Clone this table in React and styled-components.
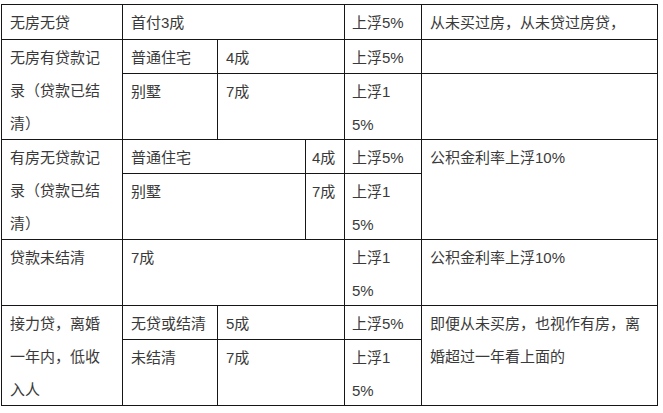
import React from 'react'
import styled, { createGlobalStyle } from 'styled-components'

const GlobalStyle = createGlobalStyle`
    html, body {
        margin: 0;
        padding: 0;
        background: #ffffff;
    }
    body {
        font-family: "Liberation Sans", "Noto Sans CJK SC", sans-serif;
    }
`

const Table = styled.div`
    display: grid;
    grid-template-columns: 121px 95px 88px 39px 77px 236px;
    grid-template-rows: 35px 34px 66px 34px 66px 66px 34px 66px;
    margin: 4px 0 0 1px;
    width: max-content;
    border-top: 1px solid #161616;
    border-left: 1px solid #161616;
    color: #3a3a3a;
    font-size: 15px;
    line-height: 33px;
`

const Cell = styled.div`
    grid-column: ${props => props.col} / span ${props => props.colSpan || 1};
    grid-row: ${props => props.row} / span ${props => props.rowSpan || 1};
    border-right: 1px solid #161616;
    border-bottom: 1px solid #161616;
    padding: 1px ${props => props.padRight || 8}px 0 ${props => props.padLeft || 8}px;
    overflow: hidden;
    word-break: break-all;
`

// narrow rate column, text wraps inside "上浮15%"
const RateCell = styled(Cell)`
    padding: 1px 11px 0 7px;
`

const rows = [
    // row 1
    { col: 1, row: 1, text: '无房无贷' },
    { col: 2, row: 1, colSpan: 3, text: '首付3成' },
    { col: 5, row: 1, rate: true, text: '上浮5%' },
    { col: 6, row: 1, text: '从未买过房，从未贷过房贷，' },
    // row 2
    { col: 1, row: 2, rowSpan: 2, text: '无房有贷款记录（贷款已结清）' },
    { col: 2, row: 2, text: '普通住宅' },
    { col: 3, row: 2, colSpan: 2, text: '4成' },
    { col: 5, row: 2, rate: true, text: '上浮5%' },
    { col: 6, row: 2, text: '' },
    { col: 2, row: 3, text: '别墅' },
    { col: 3, row: 3, colSpan: 2, text: '7成' },
    { col: 5, row: 3, rate: true, text: '上浮15%' },
    { col: 6, row: 3, text: '' },
    // row 3
    { col: 1, row: 4, rowSpan: 2, text: '有房无贷款记录（贷款已结清）' },
    { col: 2, row: 4, colSpan: 2, text: '普通住宅' },
    { col: 4, row: 4, padLeft: 6, padRight: 2, text: '4成' },
    { col: 5, row: 4, rate: true, text: '上浮5%' },
    { col: 6, row: 4, rowSpan: 2, text: '公积金利率上浮10%' },
    { col: 2, row: 5, colSpan: 2, text: '别墅' },
    { col: 4, row: 5, padLeft: 6, padRight: 2, text: '7成' },
    { col: 5, row: 5, rate: true, text: '上浮15%' },
    // row 4
    { col: 1, row: 6, text: '贷款未结清' },
    { col: 2, row: 6, colSpan: 3, text: '7成' },
    { col: 5, row: 6, rate: true, text: '上浮15%' },
    { col: 6, row: 6, text: '公积金利率上浮10%' },
    // row 5
    { col: 1, row: 7, rowSpan: 2, text: '接力贷，离婚一年内，低收入人' },
    { col: 2, row: 7, text: '无贷或结清' },
    { col: 3, row: 7, colSpan: 2, text: '5成' },
    { col: 5, row: 7, rate: true, text: '上浮5%' },
    { col: 6, row: 7, rowSpan: 2, text: '即便从未买房，也视作有房，离婚超过一年看上面的' },
    { col: 2, row: 8, text: '未结清' },
    { col: 3, row: 8, colSpan: 2, text: '7成' },
    { col: 5, row: 8, rate: true, text: '上浮15%' },
]

export default function App() {
    return (
        <>
            <GlobalStyle />
            <Table>
                {rows.map((item, index) => {
                    const Comp = item.rate ? RateCell : Cell
                    return <Comp
                        key={index}
                        col={item.col}
                        row={item.row}
                        colSpan={item.colSpan}
                        rowSpan={item.rowSpan}
                        padLeft={item.padLeft}
                        padRight={item.padRight}
                    >
                        {item.text}
                    </Comp>
                })}
            </Table>
        </>
    )
}
